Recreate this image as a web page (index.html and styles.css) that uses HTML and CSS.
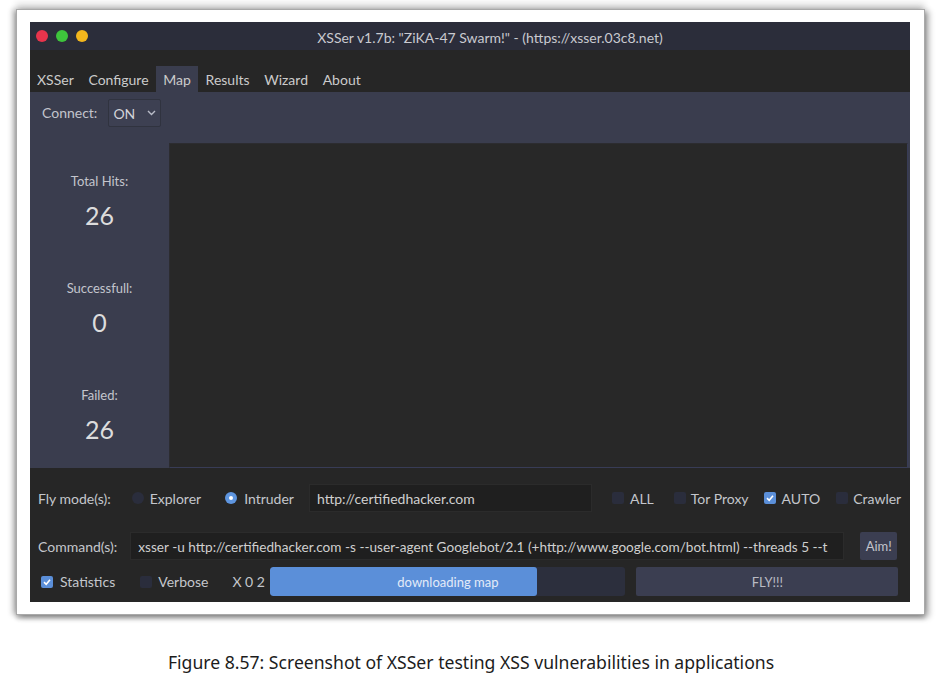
FILE: index.html
```html
<!DOCTYPE html>
<html>
<head>
<meta charset="utf-8">
<link rel="stylesheet" href="styles.css">
</head>
<body>
<div class="frame">
  <div class="window">
    <div class="titlebar">
      <div class="dots"><span class="dot red"></span><span class="dot green"></span><span class="dot yellow"></span></div>
      <div class="title">XSSer v1.7b: "ZiKA-47 Swarm!" - (https://xsser.03c8.net)</div>
    </div>
    <div class="tabbar">
      <span class="tab">XSSer</span>
      <span class="tab">Configure</span>
      <span class="tab active">Map</span>
      <span class="tab">Results</span>
      <span class="tab">Wizard</span>
      <span class="tab">About</span>
    </div>
    <div class="panel">
      <div class="connect-row">
        <span class="lbl">Connect:</span>
        <div class="combo"><span>ON</span>
          <svg class="chev" width="9" height="6" viewBox="0 0 9 6"><path d="M1 1 L4.5 4.5 L8 1" fill="none" stroke="#b9bcc8" stroke-width="1.4"/></svg>
        </div>
      </div>
      <div class="content">
        <div class="stats">
          <div class="stat"><div class="stat-label">Total Hits:</div><div class="stat-num">26</div></div>
          <div class="stat"><div class="stat-label">Successfull:</div><div class="stat-num">0</div></div>
          <div class="stat"><div class="stat-label">Failed:</div><div class="stat-num">26</div></div>
        </div>
        <div class="map"></div>
      </div>
    </div>
    <div class="controls">
      <div class="row row-fly">
        <span class="lbl">Fly mode(s):</span>
        <span class="radio r-explorer"></span><span class="opt">Explorer</span>
        <span class="radio checked r-intruder"></span><span class="opt">Intruder</span>
        <div class="input url">http://certifiedhacker.com</div>
        <span class="box b-all"></span><span class="opt">ALL</span>
        <span class="box b-tor"></span><span class="opt">Tor Proxy</span>
        <span class="box checked b-auto"><svg width="10" height="10" viewBox="0 0 10 10"><path d="M2 5.2 L4.2 7.3 L8 2.8" fill="none" stroke="#fff" stroke-width="1.6"/></svg></span><span class="opt">AUTO</span>
        <span class="box b-crawl"></span><span class="opt">Crawler</span>
      </div>
      <div class="row row-cmd">
        <span class="lbl">Command(s):</span>
        <div class="input cmd">xsser -u http://certifiedhacker.com -s --user-agent Googlebot/2.1 (+http://www.google.com/bot.html) --threads 5 --t</div>
        <div class="btn aim">Aim!</div>
      </div>
      <div class="row row-bottom">
        <span class="box checked b-stat"><svg width="10" height="10" viewBox="0 0 10 10"><path d="M2 5.2 L4.2 7.3 L8 2.8" fill="none" stroke="#fff" stroke-width="1.6"/></svg></span><span class="opt">Statistics</span>
        <span class="box b-verb"></span><span class="opt">Verbose</span>
        <span class="xo">X 0 2</span>
        <div class="progress"><div class="fill" style="width:75%"></div><span class="ptext">downloading map</span></div>
        <div class="btn fly">FLY!!!</div>
      </div>
    </div>
  </div>
</div>
<p class="caption">Figure 8.57: Screenshot of XSSer testing XSS vulnerabilities in applications</p>
</body>
</html>
```

FILE: styles.css
```css
html, body {
  margin: 0;
  padding: 0;
  background: #ffffff;
}
body {
  width: 940px;
  height: 680px;
  overflow: hidden;
  font-family: Lato, "Noto Sans", sans-serif;
}
.frame {
  margin: 9px 0 0 16px;
  width: 909px;
  height: 606px;
  box-sizing: border-box;
  padding: 13px 15px 13px 14px;
  background: #ffffff;
  border: 1px solid #a9a9a9;
  box-shadow: -4px 0 5px rgba(0,0,0,0.22), 4px 2px 6px rgba(0,0,0,0.3), 0 -6px 6px rgba(0,0,0,0.12), 0 4px 4px rgba(0,0,0,0.2);
}
.window {
  width: 880px;
  height: 580px;
  background: #262626;
  display: flex;
  flex-direction: column;
  margin-top: -1px;
  margin-left: -1px;
}
.titlebar {
  height: 28px;
  background: #2b2d3a;
  display: flex;
  align-items: center;
}
.dots {
  display: flex;
  gap: 8px;
  padding-left: 6px;
}
.dot {
  width: 12px;
  height: 12px;
  border-radius: 50%;
  display: block;
}
.red { background: #e8344c; }
.green { background: #3ec43c; }
.yellow { background: #f3b61d; }
.title {
  flex: 1;
  text-align: center;
  color: #c9cad0;
  font-size: 14px;
  padding-right: 18px;
  margin-top: 2px;
}
.tabbar {
  height: 42px;
  background: #262626;
  display: flex;
  align-items: flex-end;
}
.tab {
  height: 26px;
  line-height: 27px;
  padding: 0 7px 0 7px;
  margin-right: 0.7px;
  color: #cbcbcb;
  font-size: 14px;
}
.tab.active {
  background: #3a3d4e;
}
.panel {
  height: 376px;
  background: #3a3d4e;
  display: flex;
  flex-direction: column;
}
.connect-row {
  height: 51px;
  display: flex;
  align-items: flex-start;
  padding-left: 12px;
  box-sizing: border-box;
  padding-top: 7px;
}
.connect-row .lbl {
  line-height: 28px;
  color: #c2c4cc;
  font-size: 14px;
  margin-right: 11px;
}
.combo {
  width: 53px;
  height: 28px;
  box-sizing: border-box;
  border: 1px solid #30333f;
  background: #3d4052;
  border-radius: 2px;
  display: flex;
  align-items: center;
  padding-left: 4px;
  color: #d2d3d8;
  font-size: 14px;
}
.chev {
  margin-left: 12px;
}
.content {
  flex: 1;
  display: flex;
}
.stats {
  width: 139px;
  padding-top: 29px;
  display: flex;
  flex-direction: column;
  gap: 49px;
}
.stat {
  text-align: center;
}
.stat-label {
  color: #c3c5cd;
  font-size: 13px;
  line-height: 18px;
}
.stat-num {
  margin-top: 10px;
  color: #dcdcdc;
  font-size: 25px;
  line-height: 30px;
}
.map {
  width: 737px;
  background: #282828;
  border: 1px solid #383c56;
  border-top-color: #2c2c30;
  border-left-color: #2c2c30;
}
.controls {
  flex: 1;
  display: flex;
  flex-direction: column;
  padding-top: 16px;
}
.row {
  display: flex;
  align-items: center;
  color: #c4c6cc;
  font-size: 14px;
}
.row-fly { height: 28px; padding-left: 8px; }
.row-cmd { height: 28px; margin-top: 20px; padding-left: 8px; }
.row-bottom { height: 29px; margin-top: 7px; padding-left: 11px; }
.radio {
  width: 12px;
  height: 12px;
  border-radius: 50%;
  background: #2a2d3c;
  box-sizing: border-box;
  margin-right: 6px;
  position: relative;
}
.radio.checked {
  background: #5e95df;
}
.radio.checked::after {
  content: "";
  position: absolute;
  left: 4px;
  top: 4px;
  width: 4px;
  height: 4px;
  border-radius: 50%;
  background: #ffffff;
}
.r-explorer { margin-left: 21px; }
.r-intruder { margin-left: 24px; margin-right: 7px; }
.input {
  height: 28px;
  line-height: 28px;
  box-sizing: border-box;
  background: #1f1f1f;
  border: 1px solid #2b2b2b;
  color: #cfcfcf;
  font-size: 14px;
  padding-left: 7px;
  white-space: nowrap;
  overflow: hidden;
}
.url { width: 283px; margin-left: 15px; }
.box {
  width: 12px;
  height: 12px;
  background: #2a2d3c;
  border-radius: 2px;
  margin-right: 6px;
  display: flex;
  align-items: center;
  justify-content: center;
}
.box.checked { background: #5b8fd9; }
.b-all { margin-left: 20px; }
.b-tor { margin-left: 20px; margin-right: 5px; }
.b-auto { margin-left: 15px; }
.b-crawl { margin-left: 16px; margin-right: 5px; }
.cmd { width: 714px; margin-left: 13px; font-size: 13.6px; text-overflow: clip; }
.btn {
  background: #3b3e51;
  color: #c2c4cc;
  display: flex;
  align-items: center;
  justify-content: center;
  border-radius: 2px;
}
.aim { width: 37px; height: 28px; margin-left: 16px; font-size: 13px; }
.b-stat { margin-right: 7px; }
.b-verb { margin-left: 25px; }
.xo { margin-left: 24px; width: 30px; white-space: nowrap; }
.progress {
  margin-left: 8px;
  width: 355px;
  height: 29px;
  background: #2c2f3d;
  border-radius: 3px;
  position: relative;
  display: flex;
  align-items: center;
  justify-content: center;
  overflow: hidden;
}
.fill {
  position: absolute;
  left: 0;
  top: 0;
  bottom: 0;
  background: #5b8fd9;
  border-radius: 3px;
}
.ptext {
  position: relative;
  color: #e3ebf8;
  font-size: 13px;
}
.fly { width: 262px; height: 29px; margin-left: 11px; font-size: 13px; color: #b9bbc4; }
.caption {
  margin: 35px 0 0 0;
  text-align: center;
  font-family: "Noto Sans", "Open Sans", sans-serif;
  font-size: 17.6px;
  color: #1c1c1c;
  padding-left: 2px;
}
```
